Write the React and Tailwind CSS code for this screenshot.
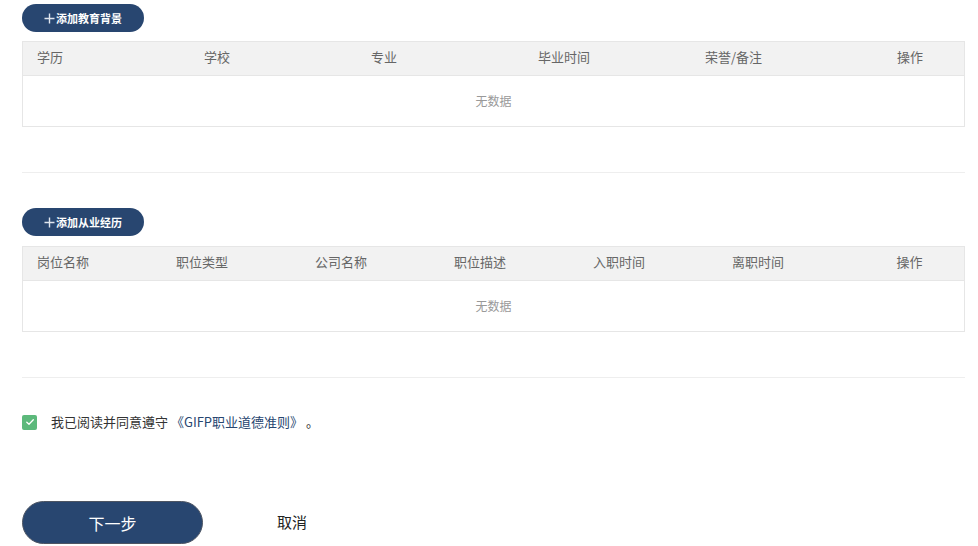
import React, { useState } from 'react';

const eduColumns = ['学历', '学校', '专业', '毕业时间', '荣誉/备注'];
const workColumns = ['岗位名称', '职位类型', '公司名称', '职位描述', '入职时间', '离职时间'];

const AddButton = ({ label }) => (
  <button className="flex items-center justify-center w-[122px] h-[28px] rounded-full bg-[#284670] text-white text-[11px] font-bold">
    <svg width="11" height="11" viewBox="0 0 11 11" className="mr-[1px]">
      <path d="M5.5 0.5 V10.5 M0.5 5.5 H10.5" stroke="#dfe5ee" strokeWidth="1.4" />
    </svg>
    {label}
  </button>
);

const EmptyTable = ({ columns, colWidth }) => (
  <div className="border border-[#e6e6e6]">
    <div className="flex h-[34px] items-center pb-[3px] bg-[#f2f2f2] border-b border-[#e6e6e6] text-[13px] text-[#666]">
      {columns.map(col => (
        <div key={col} className={`${colWidth} pl-[14px]`}>{col}</div>
      ))}
      <div className="flex-1 text-center pr-[2px]">操作</div>
    </div>
    <div className="h-[50px] flex items-center justify-center text-[12px] text-[#999]">无数据</div>
  </div>
);

const App = () => {
  const [agreed, setAgreed] = useState(true);

  return (
    <div className="w-[978px] h-[546px] bg-white overflow-hidden pl-[22px] pr-[13px] pt-[4px]" style={{ fontFamily: '"Noto Sans CJK SC", "Noto Sans", sans-serif' }}>
      {/* 教育背景 */}
      <AddButton label="添加教育背景" />
      <div className="mt-[9px]">
        <EmptyTable columns={eduColumns} colWidth="w-[167px]" />
      </div>
      <div className="mt-[45px] border-t border-[#eeeeee]" />

      {/* 从业经历 */}
      <div className="mt-[35px]">
        <AddButton label="添加从业经历" />
      </div>
      <div className="mt-[10px]">
        <EmptyTable columns={workColumns} colWidth="w-[139px]" />
      </div>
      <div className="mt-[45px] border-t border-[#eeeeee]" />

      {/* 协议 */}
      <div className="mt-[36px] flex items-center h-[16px]">
        <button
          onClick={() => setAgreed(!agreed)}
          className={`w-[15px] h-[15px] rounded-[2px] flex items-center justify-center ${agreed ? 'bg-[#5cb97b]' : 'border border-[#ccc] bg-white'}`}
        >
          {agreed && (
            <svg width="10" height="10" viewBox="0 0 10 10" fill="none">
              <path d="M1.8 5.2 L4 7.3 L8.3 2.8" stroke="white" strokeWidth="1.3" strokeLinecap="round" strokeLinejoin="round" />
            </svg>
          )}
        </button>
        <p className="ml-[14px] text-[13px] text-[#333]">
          我已阅读并同意遵守 <span className="text-[#284670]">《GIFP职业道德准则》</span> 。
        </p>
      </div>

      {/* 操作 */}
      <div className="mt-[71px] flex items-center">
        <button className="w-[181px] h-[43px] rounded-full bg-[#284670] border border-[#4d5563] text-white text-[16px]">下一步</button>
        <button className="ml-[74px] text-[15px] text-[#222]">取消</button>
      </div>
    </div>
  );
};

export default App;
